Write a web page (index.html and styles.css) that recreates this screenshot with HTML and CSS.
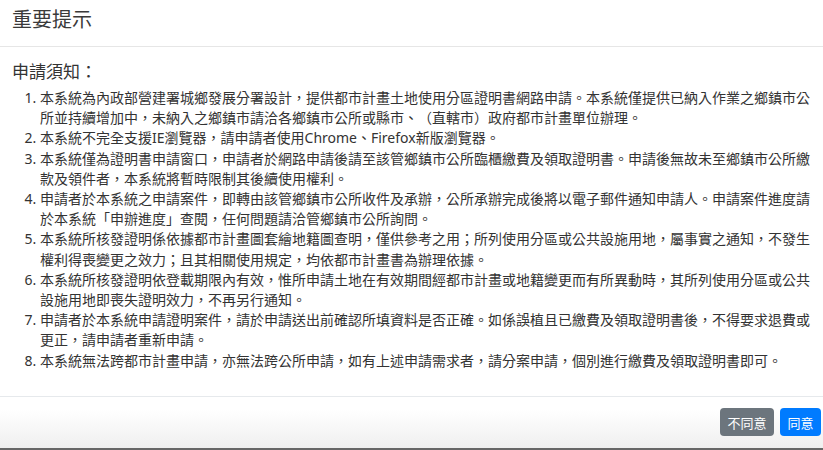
FILE: index.html
```html
<!DOCTYPE html>
<html lang="zh-Hant">
<head>
    <meta charset="UTF-8">
    <meta name="viewport" content="width=device-width, initial-scale=1.0">
    <title>重要提示</title>
    <link rel="stylesheet" href="styles.css">
</head>
<body>
    <div class="modal">
        <div class="modal-header">
            <h4 class="modal-title">重要提示</h4>
        </div>
        <div class="modal-body">
            <h5 class="notice-title">申請須知：</h5>
            <ol class="notice-list">
                <li>本系統為內政部營建署城鄉發展分署設計，提供都市計畫土地使用分區證明書網路申請。本系統僅提供已納入作業之鄉鎮市公所並持續增加中，未納入之鄉鎮市請洽各鄉鎮市公所或縣市、（直轄市）政府都市計畫單位辦理。</li>
                <li>本系統不完全支援IE瀏覽器，請申請者使用Chrome、Firefox新版瀏覽器。</li>
                <li>本系統僅為證明書申請窗口，申請者於網路申請後請至該管鄉鎮市公所臨櫃繳費及領取證明書。申請後無故未至鄉鎮市公所繳款及領件者，本系統將暫時限制其後續使用權利。</li>
                <li>申請者於本系統之申請案件，即轉由該管鄉鎮市公所收件及承辦，公所承辦完成後將以電子郵件通知申請人。申請案件進度請於本系統「申辦進度」查閱，任何問題請洽管鄉鎮市公所詢問。</li>
                <li>本系統所核發證明係依據都市計畫圖套繪地籍圖查明，僅供參考之用；所列使用分區或公共設施用地，屬事實之通知，不發生權利得喪變更之效力；且其相關使用規定，均依都市計畫書為辦理依據。</li>
                <li>本系統所核發證明依登載期限內有效，惟所申請土地在有效期間經都市計畫或地籍變更而有所異動時，其所列使用分區或公共設施用地即喪失證明效力，不再另行通知。</li>
                <li>申請者於本系統申請證明案件，請於申請送出前確認所填資料是否正確。如係誤植且已繳費及領取證明書後，不得要求退費或更正，請申請者重新申請。</li>
                <li>本系統無法跨都市計畫申請，亦無法跨公所申請，如有上述申請需求者，請分案申請，個別進行繳費及領取證明書即可。</li>
            </ol>
        </div>
        <div class="modal-footer">
            <button class="btn btn-secondary">不同意</button>
            <button class="btn btn-primary">同意</button>
        </div>
    </div>
</body>
</html>
```

FILE: styles.css
```css
*,
*::before,
*::after{
    padding: 0;
    margin: 0;
    box-sizing: border-box;
}
body{
    font-family: "Noto Sans", "Noto Sans CJK TC", sans-serif;
    color: #333333;
    background-color: #ffffff;
    text-spacing-trim: space-all;
}
.modal{
    width: 823px;
    height: 450px;
    display: flex;
    flex-direction: column;
}
.modal-header{
    padding: 5px 12px 11px;
    border-bottom: 1px solid #e6e6e6;
}
.modal-title{
    font-size: 20px;
    font-weight: 400;
    line-height: 30px;
    color: #3a3a3a;
}
.modal-body{
    flex: 1;
    padding: 12px 6px 0 12px;
}
.notice-title{
    font-size: 17px;
    font-weight: 400;
    line-height: 26px;
}
.notice-list{
    margin-top: 3px;
    padding-left: 28px;
    font-size: 14px;
    line-height: 20.2px;
}
.modal-footer{
    height: 54px;
    display: flex;
    align-items: center;
    justify-content: flex-end;
    gap: 6px;
    padding: 0 2px 1px 0;
    border-top: 1px solid #e6e9ec;
    border-bottom: 2px solid #676767;
    background: linear-gradient(#ffffff 25%, #efefef);
}
.btn{
    height: 28px;
    padding: 0 7.5px;
    font-family: inherit;
    font-size: 13px;
    color: #ffffff;
    border: none;
    border-radius: 4px;
    cursor: pointer;
}
.btn-secondary{
    background-color: #6c757d;
}
.btn-primary{
    background-color: #007bff;
}
```
